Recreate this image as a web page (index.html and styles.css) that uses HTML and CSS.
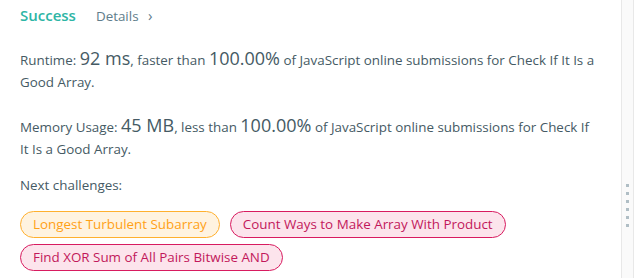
FILE: index.html
```html
<!DOCTYPE html>
<html>
<head>
<meta charset="utf-8">
<link rel="stylesheet" href="styles.css">
</head>
<body>
<div class="page">
  <main class="content">
    <div class="header">
      <span class="status">Success</span>
      <a class="details">Details <span class="chev">›</span></a>
    </div>
    <p class="stat">Runtime: <span class="big">92 ms</span>, faster than <span class="big">100.00%</span> of JavaScript online submissions for Check If It Is a Good Array.</p>
    <p class="stat">Memory Usage: <span class="big">45 MB</span>, less than <span class="big">100.00%</span> of JavaScript online submissions for Check If It Is a Good Array.</p>
    <p class="next">Next challenges:</p>
    <div class="tags">
      <span class="tag medium">Longest Turbulent Subarray</span>
      <span class="tag hard">Count Ways to Make Array With Product</span>
      <span class="tag hard">Find XOR Sum of All Pairs Bitwise AND</span>
    </div>
  </main>
  <aside class="gutter">
    <div class="grip">
      <i></i><i></i><i></i><i></i><i></i><i></i>
    </div>
  </aside>
</div>
</body>
</html>
```
FILE: styles.css
```css
html, body {
  margin: 0;
  padding: 0;
  background: #fff;
}
body {
  font-family: "Open Sans", "Noto Sans", sans-serif;
  color: #455a64;
  font-size: 13.4px;
}
.page {
  display: flex;
  height: 278px;
}
.content {
  flex: 1;
  padding: 5px 20px 0 20px;
}
.header {
  display: flex;
  align-items: baseline;
  gap: 20px;
  height: 22px;
}
.status {
  color: #2db5a5;
  font-size: 15px;
  font-weight: 600;
}
.details {
  color: #607d8b;
  font-size: 13.4px;
}
.chev {
  margin-left: 6px;
  font-size: 15px;
}
.stat {
  margin: 22px 0 0 0;
  line-height: 22px;
}
.stat + .stat {
  margin-top: 23px;
}
.big {
  font-size: 18px;
  line-height: 1;
}
.next {
  margin: 15px 0 0 0;
  line-height: 21px;
}
.tags {
  margin-top: 15px;
  display: flex;
  flex-wrap: wrap;
  gap: 6px 10px;
}
.tag {
  display: inline-block;
  box-sizing: border-box;
  height: 27px;
  line-height: 25px;
  padding: 0 12px;
  border-radius: 14px;
  border: 1px solid;
}
.medium {
  color: #ffa116;
  border-color: #ffb02e;
  background: #fff3e0;
}
.hard {
  color: #c2185b;
  border-color: #d81b60;
  background: #fce4ec;
}
.gutter {
  width: 11px;
  margin-right: 2px;
  border-left: 1px solid #e8e8e8;
  border-right: 1px solid #e8e8e8;
  background: #fafafa;
  display: flex;
  justify-content: center;
}
.grip {
  margin-top: 184px;
  display: flex;
  flex-direction: column;
  gap: 5px;
}
.grip i {
  width: 3px;
  height: 3px;
  background: #b0bec5;
}
```
